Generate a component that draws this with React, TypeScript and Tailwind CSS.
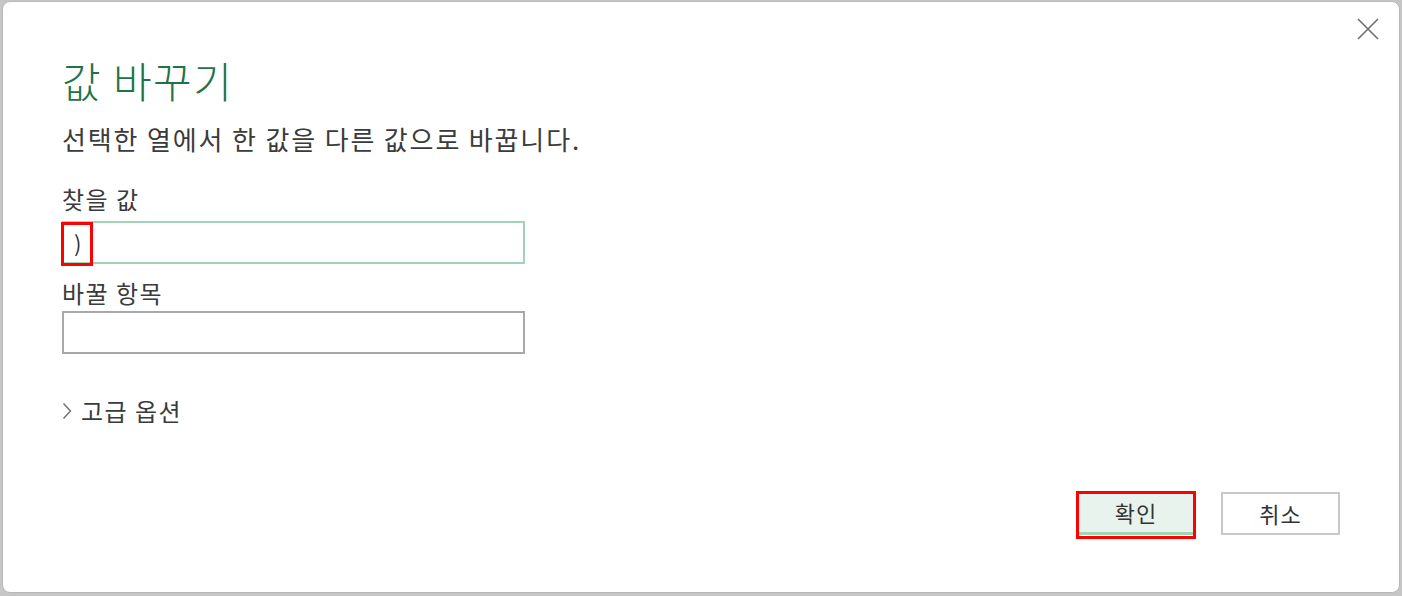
import React from "react";

const font = { fontFamily: '"Noto Sans CJK KR", "Noto Sans", sans-serif' };

const App: React.FC = () => {
	return (
		<div className="w-[1402px] h-[596px] bg-[#c6c6c6] pt-[1px] pl-[2px] overflow-hidden" style={font}>
			<div className="relative w-[1398px] h-[592px] bg-white border border-[#b8b8b8] rounded-[8px] flex flex-col pl-[59px] pr-[59px]">
				<button
					type="button"
					className="absolute top-[15px] right-[19px] w-[24px] h-[24px] flex items-center justify-center"
				>
					<svg width="24" height="24" viewBox="0 0 24 24" fill="none" stroke="#6e6e6e" strokeWidth="1.6">
						<path d="M2 2 L22 22 M22 2 L2 22" />
					</svg>
				</button>

				<h1 className="mt-[50px] text-[42px] leading-[56px] font-light tracking-[1.5px] text-[#217346]">값 바꾸기</h1>
				<p className="mt-[13px] text-[26px] leading-[36px] tracking-[1.85px] text-[#3b3b3b]">
					선택한 열에서 한 값을 다른 값으로 바꿉니다.
				</p>

				<label className="mt-[25px] text-[24px] leading-[34px] tracking-[1.5px] text-[#3b3b3b]">찾을 값</label>
				<div className="relative mt-[5px] w-[463px] h-[43px] border-2 border-[#9fd4b6] flex items-center pl-[10px] text-[22px] text-[#333]">
					)
					<div className="absolute -left-[3px] top-[-1px] w-[32px] h-[44px] border-[3px] border-[#ff0000]" />
				</div>

				<label className="mt-[12px] text-[24px] leading-[34px] tracking-[1.5px] text-[#3b3b3b]">바꿀 항목</label>
				<div className="mt-[1px] w-[463px] h-[43px] border-2 border-[#a8a8a8]" />

				<div className="mt-[40px] flex items-center gap-[9px] text-[24px] leading-[34px] tracking-[1.5px] text-[#3b3b3b]">
					<svg width="10" height="18" viewBox="0 0 10 18" fill="none" stroke="#6e6e6e" strokeWidth="1.4">
						<path d="M1.5 1.5 L8.5 9 L1.5 16.5" />
					</svg>
					<span>고급 옵션</span>
				</div>

				<div className="mt-auto mb-[57px] flex justify-end gap-[26px]">
					<div className="relative">
						<button
							type="button"
							className="w-[118px] h-[43px] bg-[#e9f3ee] border-b-[3px] border-[#a3d3b5] text-[22px] tracking-[1px] text-[#333]"
						>
							확인
						</button>
						<div className="absolute -left-[1px] -top-[1px] w-[120px] h-[48px] border-[3px] border-[#ff0000]" />
					</div>
					<button
						type="button"
						className="w-[119px] h-[43px] bg-white border-2 border-[#c8c8c8] text-[22px] tracking-[1px] text-[#333]"
					>
						취소
					</button>
				</div>
			</div>
		</div>
	);
};

export default App;
